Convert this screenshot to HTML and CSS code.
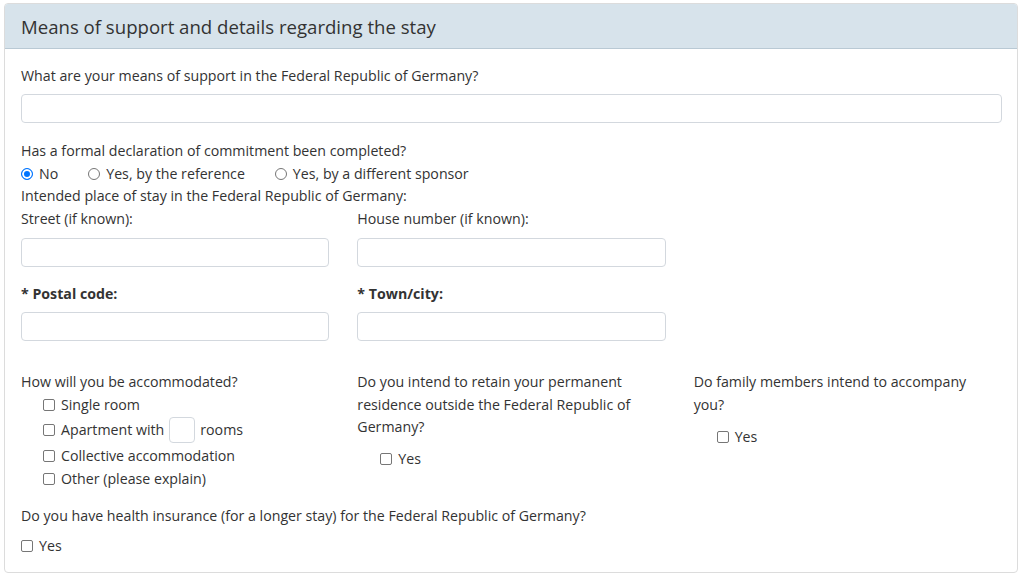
FILE: index.html
```html
<!DOCTYPE html>
<html lang="en">
<head>
<meta charset="utf-8">
<title>Means of support</title>
<link rel="stylesheet" href="styles.css">
</head>
<body>
<div class="card">
  <div class="card-header">Means of support and details regarding the stay</div>
  <div class="card-body">
    <div class="label">What are your means of support in the Federal Republic of Germany?</div>
    <div class="input full"></div>

    <div class="label q2">Has a formal declaration of commitment been completed?</div>
    <div class="radios">
      <span class="opt"><span class="radio checked"></span>No</span>
      <span class="opt"><span class="radio"></span>Yes, by the reference</span>
      <span class="opt"><span class="radio"></span>Yes, by a different sponsor</span>
    </div>
    <div class="label">Intended place of stay in the Federal Republic of Germany:</div>

    <div class="grid addr">
      <div>
        <div class="label">Street (if known):</div>
        <div class="input"></div>
      </div>
      <div>
        <div class="label">House number (if known):</div>
        <div class="input"></div>
      </div>
      <div></div>
    </div>

    <div class="grid addr2">
      <div>
        <div class="label bold">* Postal code:</div>
        <div class="input"></div>
      </div>
      <div>
        <div class="label bold">* Town/city:</div>
        <div class="input"></div>
      </div>
      <div></div>
    </div>

    <div class="grid questions">
      <div>
        <div class="label">How will you be accommodated?</div>
        <div class="checks">
          <div class="chk"><span class="box"></span>Single room</div>
          <div class="chk apt"><span class="box"></span>Apartment with<span class="mini"></span>rooms</div>
          <div class="chk"><span class="box"></span>Collective accommodation</div>
          <div class="chk"><span class="box"></span>Other (please explain)</div>
        </div>
      </div>
      <div>
        <div class="label">Do you intend to retain your permanent residence outside the Federal Republic of Germany?</div>
        <div class="checks yes"><div class="chk"><span class="box"></span>Yes</div></div>
      </div>
      <div>
        <div class="label narrow">Do family members intend to accompany you?</div>
        <div class="checks yes"><div class="chk"><span class="box"></span>Yes</div></div>
      </div>
    </div>

    <div class="label q-last">Do you have health insurance (for a longer stay) for the Federal Republic of Germany?</div>
    <div class="chk last"><span class="box"></span>Yes</div>
  </div>
</div>
</body>
</html>
```

FILE: styles.css
```css
* { box-sizing: border-box; }
html, body { margin: 0; padding: 0; background: #fff; }
body {
  padding: 3px 6px 0 4px;
  font-family: "Open Sans", "Noto Sans", sans-serif;
  font-size: 14.2px;
  color: #333;
  line-height: 22.4px;
}
.card {
  border: 1px solid #dcdcdc;
  border-radius: 4px;
  overflow: hidden;
  height: 570px;
}
.card-header {
  background: #d7e3eb;
  border-bottom: 1px solid #b9c9d4;
  height: 45px;
  padding: 0 16px;
  font-size: 18.6px;
  line-height: 45px;
  color: #333;
}
.card-body {
  padding: 16px 15px 0 16px;
}
.bold { font-weight: 700; }
.narrow { max-width: 290px; }
.input {
  height: 29px;
  border: 1px solid #d3d8de;
  border-radius: 4px;
  margin-top: 7px;
  background: #fff;
}
.q2 { margin-top: 17px; }
.radios { display: flex; gap: 30px; height: 22.4px; }
.opt { display: inline-flex; align-items: center; }
.radio {
  width: 12px; height: 12px;
  border: 1px solid #767676;
  border-radius: 50%;
  margin-right: 6px;
  display: inline-block;
}
.radio.checked {
  border: 1px solid #0075ff;
  background: #0075ff;
  box-shadow: inset 0 0 0 2px #fff;
}
.grid {
  display: grid;
  grid-template-columns: repeat(3, 1fr);
  column-gap: 28px;
}
.addr .input { margin-top: 8px; }
.addr2 { margin-top: 16px; }
.questions { margin-top: 30px; }
.checks { padding-left: 22px; }
.checks.yes { margin-top: 9px; padding-left: 23px; }
.chk { display: flex; align-items: center; height: 23px; }
.chk.apt { height: 26px; margin: 0 0 2px; }
.box {
  width: 12px; height: 12px;
  border: 1px solid #767676;
  border-radius: 2px;
  margin-right: 6px;
  display: inline-block;
  flex: none;
}
.mini {
  width: 26px; height: 26px;
  border: 1px solid #d3d8de;
  border-radius: 4px;
  margin: 0 5px;
  display: inline-block;
}
.q-last { margin-top: 14px; }
.chk.last { margin-top: 7px; }
```
